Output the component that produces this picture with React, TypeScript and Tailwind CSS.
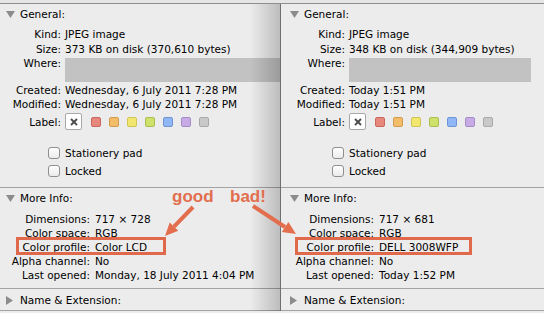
import React from "react";

type Info = {
  kind: string;
  size: string;
  created: string;
  modified: string;
  dims: string;
  profile: string;
  lastOpened: string;
};

const labelColors = [
  "bg-[#e8877c] border-[#c9675d]",
  "bg-[#f2bd6b] border-[#d39c4c]",
  "bg-[#f1e66f] border-[#cfc452]",
  "bg-[#cde16c] border-[#abbf4e]",
  "bg-[#8fb7f6] border-[#6d95d6]",
  "bg-[#c7aae6] border-[#a68ac6]",
  "bg-[#c9c9c9] border-[#a9a9a9]",
];

function DownTri() {
  return (
    <svg width="9" height="7" viewBox="0 0 9 7" className="block">
      <polygon points="0,0 9,0 4.5,7" fill="#8c8c8c" />
    </svg>
  );
}

function RightTri() {
  return (
    <svg width="7" height="9" viewBox="0 0 7 9" className="block">
      <polygon points="0,0 7,4.5 0,9" fill="#8c8c8c" />
    </svg>
  );
}

function Header({ title, open }: { title: string; open: boolean }) {
  return (
    <div className="flex h-[14px] items-center leading-[14px]">
      <div className="ml-[9px] flex w-[14px] items-center">{open ? <DownTri /> : <RightTri />}</div>
      <div>{title}</div>
    </div>
  );
}

function GRow({ label, value, cls = "" }: { label: string; value: string; cls?: string }) {
  return (
    <div className={"flex h-[14px] leading-[14px] " + cls}>
      <div className="w-[64px] shrink-0 text-right">{label}</div>
      <div className="ml-[4px] whitespace-nowrap">{value}</div>
    </div>
  );
}

function MRow({ label, value }: { label: string; value: string }) {
  return (
    <div className="flex h-[14px] leading-[14px]">
      <div className="w-[93px] shrink-0 text-right whitespace-nowrap">{label}</div>
      <div className="ml-[5px] whitespace-nowrap">{value}</div>
    </div>
  );
}

function Check({ label, cls }: { label: string; cls: string }) {
  return (
    <div className={"flex h-[14px] items-center leading-[14px] " + cls}>
      <div className="ml-[51px] h-[12px] w-[12px] rounded-[3px] border border-[#8e8e8e] bg-linear-to-b from-white to-[#ebebeb]" />
      <div className="ml-[5px]">{label}</div>
    </div>
  );
}

function Sep({ cls }: { cls: string }) {
  return <div className={"h-px w-full bg-[#a3a3a3] " + cls} />;
}

function Panel({ info, left }: { info: Info; left: boolean }) {
  return (
    <div className="flex flex-col">
      <div className="mt-[3px]">
        <Header title="General:" open />
      </div>
      <GRow label="Kind:" value={info.kind} cls="mt-[6px]" />
      <GRow label="Size:" value={info.size} cls="mt-[1px]" />
      <div className="flex h-[26px]">
        <div className="w-[64px] shrink-0 text-right leading-[14px]">Where:</div>
        <div
          className={
            left
              ? "mt-[2px] ml-[4px] h-[24px] flex-1 bg-[#c2c2c2]"
              : "mt-[2px] ml-[4px] h-[24px] w-[182px] bg-[#c2c2c2]"
          }
        />
      </div>
      <GRow label="Created:" value={info.created} cls="mt-[1px]" />
      <GRow label="Modified:" value={info.modified} />
      <div className="mt-[2px] flex h-[17px] items-center">
        <div className="w-[64px] shrink-0 text-right leading-[14px]">Label:</div>
        <div className="ml-[4px] flex h-[17px] w-[17px] items-center justify-center rounded-[2px] border border-[#a8a8a8] bg-white">
          <svg width="8" height="8" viewBox="0 0 8 8">
            <path d="M1 1 L7 7 M7 1 L1 7" stroke="#4a4a4a" strokeWidth="1.8" />
          </svg>
        </div>
        <div className="ml-[9px] flex gap-[8px]">
          {labelColors.map((c, i) => (
            <div key={i} className={"h-[10px] w-[10px] rounded-[2px] border " + c} />
          ))}
        </div>
      </div>
      <Check label="Stationery pad" cls="mt-[16px]" />
      <Check label="Locked" cls="mt-[4px]" />
      <Sep cls="mt-[9px]" />
      <div className="mt-[3px]">
        <Header title="More Info:" open />
      </div>
      <div className="mt-[7px] flex flex-col">
        <MRow label="Dimensions:" value={info.dims} />
        <MRow label="Color space:" value="RGB" />
        <MRow label="Color profile:" value={info.profile} />
        <MRow label="Alpha channel:" value="No" />
        <MRow label="Last opened:" value={info.lastOpened} />
      </div>
      <Sep cls="mt-[6px]" />
      <div className="mt-[4px]">
        <Header title="Name & Extension:" open={false} />
      </div>
      <Sep cls="mt-[3px]" />
    </div>
  );
}

export default function App() {
  const leftInfo: Info = {
    kind: "JPEG image",
    size: "373 KB on disk (370,610 bytes)",
    created: "Wednesday, 6 July 2011 7:28 PM",
    modified: "Wednesday, 6 July 2011 7:28 PM",
    dims: "717 × 728",
    profile: "Color LCD",
    lastOpened: "Monday, 18 July 2011 4:04 PM",
  };
  const rightInfo: Info = {
    kind: "JPEG image",
    size: "348 KB on disk (344,909 bytes)",
    created: "Today 1:51 PM",
    modified: "Today 1:51 PM",
    dims: "717 × 681",
    profile: "DELL 3008WFP",
    lastOpened: "Today 1:52 PM",
  };
  return (
    <div className="relative h-[313px] w-[544px] overflow-hidden bg-[#ececec] font-['DejaVu_Sans',sans-serif] text-[10.5px] text-black">
      <div className="h-[3px] bg-[#e6e6e6]" />
      <div className="h-px bg-[#8e8e8e]" />
      <div className="flex">
        <div className="relative -ml-[3px] w-[283px] shrink-0 overflow-hidden">
          <Panel info={leftInfo} left />
          <div className="pointer-events-none absolute top-0 right-0 bottom-0 w-[30px] bg-linear-to-r from-[rgba(0,0,0,0)] to-[rgba(0,0,0,0.2)]" />
        </div>
        <div className="w-[264px] shrink-0 border-l border-[#6f6f6f]">
          <Panel info={rightInfo} left={false} />
        </div>
      </div>

      {/* annotations */}
      <div className="absolute top-[188px] left-[172px] font-['Liberation_Sans',Arial,sans-serif] text-[17px] leading-[17px] font-bold text-[#e26e4e]">
        good
      </div>
      <div className="absolute top-[188px] left-[230px] font-['Liberation_Sans',Arial,sans-serif] text-[17px] leading-[17px] font-bold text-[#e26e4e]">
        bad!
      </div>
      <div className="absolute top-[237px] left-[16px] h-[18px] w-[150px] border-[3px] border-[#e0694b]" />
      <div className="absolute top-[237px] left-[295px] h-[18px] w-[177px] border-[3px] border-[#e0694b]" />
      <svg className="pointer-events-none absolute top-0 left-0" width="544" height="313" viewBox="0 0 544 313">
        <line x1="193" y1="207" x2="174" y2="226.6" stroke="#e26e4e" strokeWidth="4" />
        <polygon points="165,236 178.3,230.8 169.7,222.4" fill="#e26e4e" />
        <line x1="253" y1="206" x2="285" y2="227" stroke="#e26e4e" strokeWidth="4" />
        <polygon points="296,234 281.8,231.9 288.4,221.9" fill="#e26e4e" />
      </svg>
    </div>
  );
}
